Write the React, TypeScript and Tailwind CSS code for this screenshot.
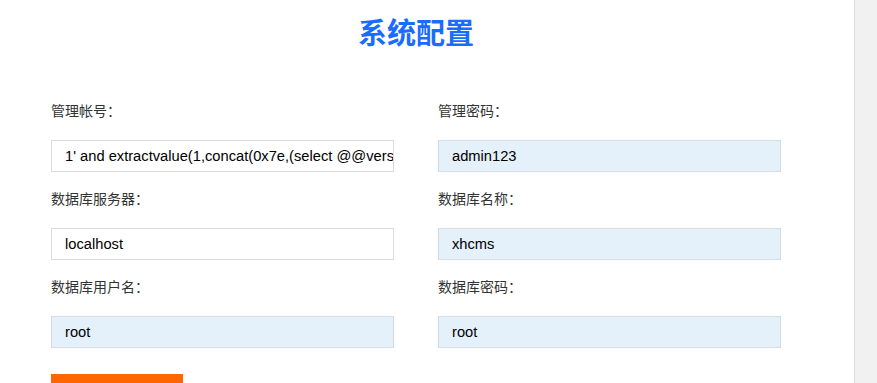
import React from "react";

type Field = { label: string; value: string; filled: boolean };

const rows: Field[][] = [
  [
    { label: "管理帐号：", value: "1' and extractvalue(1,concat(0x7e,(select @@version),0x7e))#", filled: false },
    { label: "管理密码：", value: "admin123", filled: true },
  ],
  [
    { label: "数据库服务器：", value: "localhost", filled: false },
    { label: "数据库名称：", value: "xhcms", filled: true },
  ],
  [
    { label: "数据库用户名：", value: "root", filled: true },
    { label: "数据库密码：", value: "root", filled: true },
  ],
];

function FormField({ field }: { field: Field }) {
  return (
    <div className="flex flex-col">
      <label className="h-5 text-[14px] leading-5 text-[#333] [font-family:'Noto_Sans_CJK_SC',sans-serif]">
        {field.label}
      </label>
      <input
        readOnly
        value={field.value}
        className={
          field.filled
            ? "mt-5 h-8 w-full border border-[#d3dbe3] bg-[#e4f0fa] pl-[13px] pr-0 text-[14.7px] text-black outline-none [font-family:'Liberation_Sans',Arial,sans-serif]"
            : "mt-5 h-8 w-full border border-[#dcdcdc] bg-white pl-[13px] pr-0 text-[14.7px] text-black outline-none [font-family:'Liberation_Sans',Arial,sans-serif]"
        }
      />
    </div>
  );
}

export default function App() {
  return (
    <div className="flex h-[383px] w-full overflow-hidden bg-white">
      <div className="flex-1">
        <div className="w-[730px] ml-[51px]">
          <h1 className="pt-[15px] h-[100px] text-center text-[29px] leading-8 font-bold text-[#1a6cff] [font-family:'Noto_Sans_CJK_SC',sans-serif]">
            系统配置
          </h1>
          <div className="flex flex-col gap-4">
            {rows.map((row, i) => (
              <div key={i} className="grid grid-cols-[343px_343px] gap-x-[44px]">
                {row.map((f) => (
                  <FormField key={f.label} field={f} />
                ))}
              </div>
            ))}
          </div>
          <button className="mt-[26px] h-9 w-[132px] bg-[#ff6600]" />
        </div>
      </div>
      <div className="w-[23px] shrink-0 border-l border-[#dddddd] bg-[#f1f1f1]" />
    </div>
  );
}
